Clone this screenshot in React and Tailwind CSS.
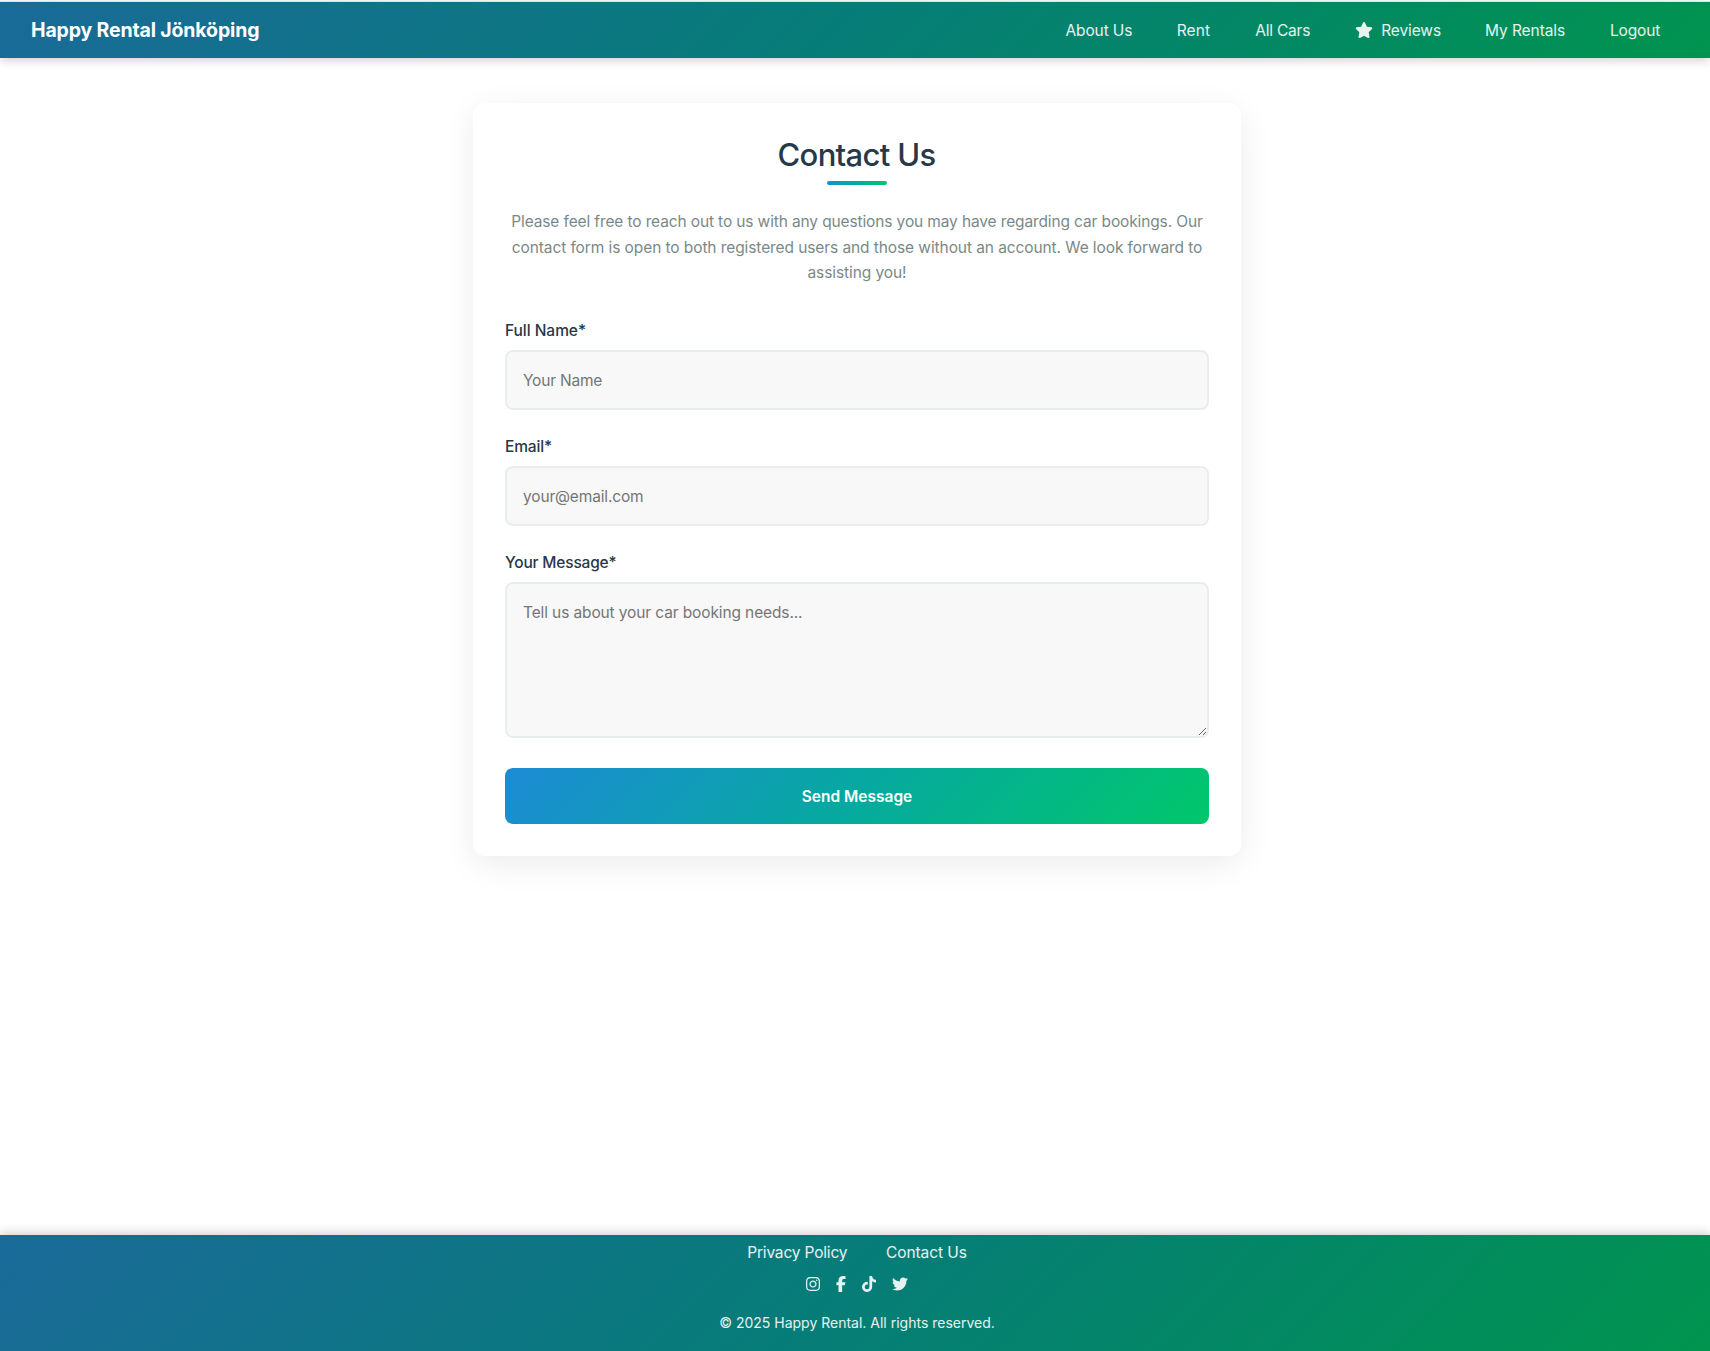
import React from "react";
import { FaStar, FaInstagram, FaFacebookF, FaTiktok } from "react-icons/fa6";
import { FaTwitter } from "react-icons/fa";

const bar =
  "bg-[linear-gradient(135deg,#1a6a99_0%,#067d77_50%,#00944f_100%)]";
const accent =
  "bg-[linear-gradient(135deg,#1d8bd6_0%,#06a99f_50%,#00c76a_100%)]";
const field =
  "block w-full rounded-lg border-2 border-[#e8eeed] bg-[#f8f8f8] px-4 text-[15.5px] text-[#27384a] outline-none placeholder:text-[#757575]";
const label =
  "mb-[7px] block pt-px text-[15.5px] leading-6 font-medium text-[#27384a]";

function Header() {
  return (
    <header
      className={`${bar} mt-[2px] flex h-14 items-center justify-between pr-[49px] pl-[31px] shadow-[0_-1px_0_#dde4e2,0_2px_10px_rgba(0,0,0,0.2)]`}
    >
      <a href="#" className="text-[19.5px] leading-6 font-bold tracking-[-0.15px] text-white">
        Happy Rental Jönköping
      </a>
      <nav className="flex items-center gap-[44.8px] text-[15.5px] leading-[25px] whitespace-nowrap text-white/90">
        <a href="#" className="w-[66.3px] pt-px tracking-[-0.14px]">About Us</a>
        <a href="#" className="w-[33.8px] pt-px tracking-[0.1px]">Rent</a>
        <a href="#" className="w-[56.3px] pt-px tracking-[-0.2px]">All Cars</a>
        <a href="#" className="flex w-[83.9px] items-center gap-2 tracking-[-0.1px]">
          <FaStar className="-ml-[1.2px] h-4 w-[18px] shrink-0" />
          <span className="pt-px">Reviews</span>
        </a>
        <a href="#" className="w-[80.2px] pt-px tracking-[-0.08px]">My Rentals</a>
        <a href="#" className="w-[51px] pt-px tracking-[-0.16px]">Logout</a>
      </nav>
    </header>
  );
}

function ContactCard() {
  return (
    <section className="mt-[45px] w-3xl rounded-xl bg-white p-8 shadow-[0_8px_32px_rgba(0,0,0,0.08)]">
      <h1 className="h-[38px] pr-px text-center text-[31px] leading-[39px] font-medium tracking-[-0.69px] text-[#27384a]">
        Contact Us
      </h1>
      <div className={`${accent} mx-auto mt-2 h-1 w-15 rounded-sm`} />
      <p className="mt-6 text-center text-[15.5px] leading-[25.6px] text-[#7a8988]">
        <span className="block tracking-[-0.128px]">
          Please feel free to reach out to us with any questions you may have regarding car bookings. Our
        </span>
        <span className="block tracking-[-0.09px]">
          contact form is open to both registered users and those without an account. We look forward to
        </span>
        <span className="block tracking-[-0.085px]">assisting you!</span>
      </p>
      <form className="mt-[32.2px]">
        <div className="mb-6">
          <label htmlFor="name" className={`${label} tracking-[-0.04px]`}>Full Name*</label>
          <input id="name" placeholder="Your Name" className={`${field} h-15 pt-[2px] tracking-[-0.21px]`} />
        </div>
        <div className="mb-6">
          <label htmlFor="email" className={`${label} tracking-[-0.14px]`}>Email*</label>
          <input id="email" placeholder="your@email.com" className={`${field} h-15 pt-[2px] tracking-[-0.16px]`} />
        </div>
        <div className="mb-[30px]">
          <label htmlFor="message" className={`${label} tracking-[-0.18px]`}>Your Message*</label>
          <textarea
            id="message"
            placeholder="Tell us about your car booking needs..."
            className={`${field} h-[156px] resize-y pt-[17px] pb-4 leading-6 tracking-[-0.12px]`}
          />
        </div>
        <button
          type="button"
          className={`${accent} block h-14 w-full rounded-lg pt-[2px] text-[15.5px] font-semibold text-white`}
        >
          Send Message
        </button>
      </form>
    </section>
  );
}

function Footer() {
  return (
    <footer
      className={`${bar} flex h-[116px] flex-col items-center pt-[6px] pl-1 text-white/90 shadow-[0_-2px_10px_rgba(0,0,0,0.2)]`}
    >
      <div className="flex gap-[38.6px] text-[15.5px] leading-6">
        <a href="#" className="tracking-[-0.17px]">Privacy Policy</a>
        <a href="#" className="tracking-[-0.08px]">Contact Us</a>
      </div>
      <div className="mt-[11px] flex gap-4">
        <FaInstagram className="h-4 w-[14px]" />
        <FaFacebookF className="h-4 w-[10px]" />
        <FaTiktok className="h-4 w-[14px]" />
        <FaTwitter className="h-4 w-4" />
      </div>
      <p className="mt-[21px] text-sm leading-5">© 2025 Happy Rental. All rights reserved.</p>
    </footer>
  );
}

export default function App() {
  return (
    <div className="flex h-[1351px] flex-col overflow-hidden bg-white font-['Inter',sans-serif] antialiased">
      <Header />
      <main className="flex flex-1 flex-col items-center pl-1">
        <ContactCard />
      </main>
      <Footer />
    </div>
  );
}
